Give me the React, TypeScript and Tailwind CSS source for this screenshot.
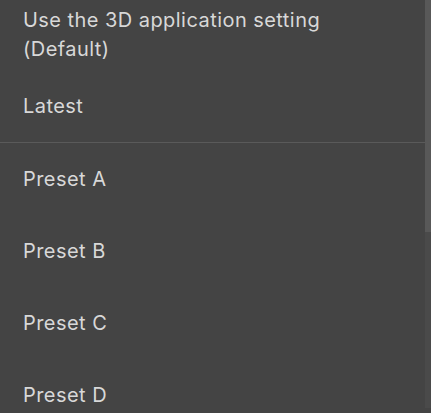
export default function App() {
  const presets = ["Preset A", "Preset B", "Preset C", "Preset D"]
  return (
    <div className="w-[431px] h-[413px] overflow-hidden bg-[#444444] flex text-[#d8d8d8] text-[20px] tracking-[0.45px] font-[Inter,sans-serif]">
      <div className="flex-1 flex flex-col">
        <div className="h-[70px] shrink-0 flex items-center px-[23px] leading-[29px]">
          <span>
            Use the 3D application setting
            <br />
            (Default)
          </span>
        </div>
        <div className="h-[72px] shrink-0 flex items-center px-[23px]">Latest</div>
        <div className="h-px shrink-0 bg-[#5a5a5a]" />
        {presets.map((p) => (
          <div key={p} className="h-[72px] shrink-0 flex items-center px-[23px]">
            {p}
          </div>
        ))}
      </div>
      {/* scrollbar */}
      <div className="w-[6px] shrink-0 flex flex-col">
        <div className="h-[232px] bg-[#585858]" />
        <div className="h-[176px] bg-[#4a4a4a]" />
      </div>
    </div>
  )
}
